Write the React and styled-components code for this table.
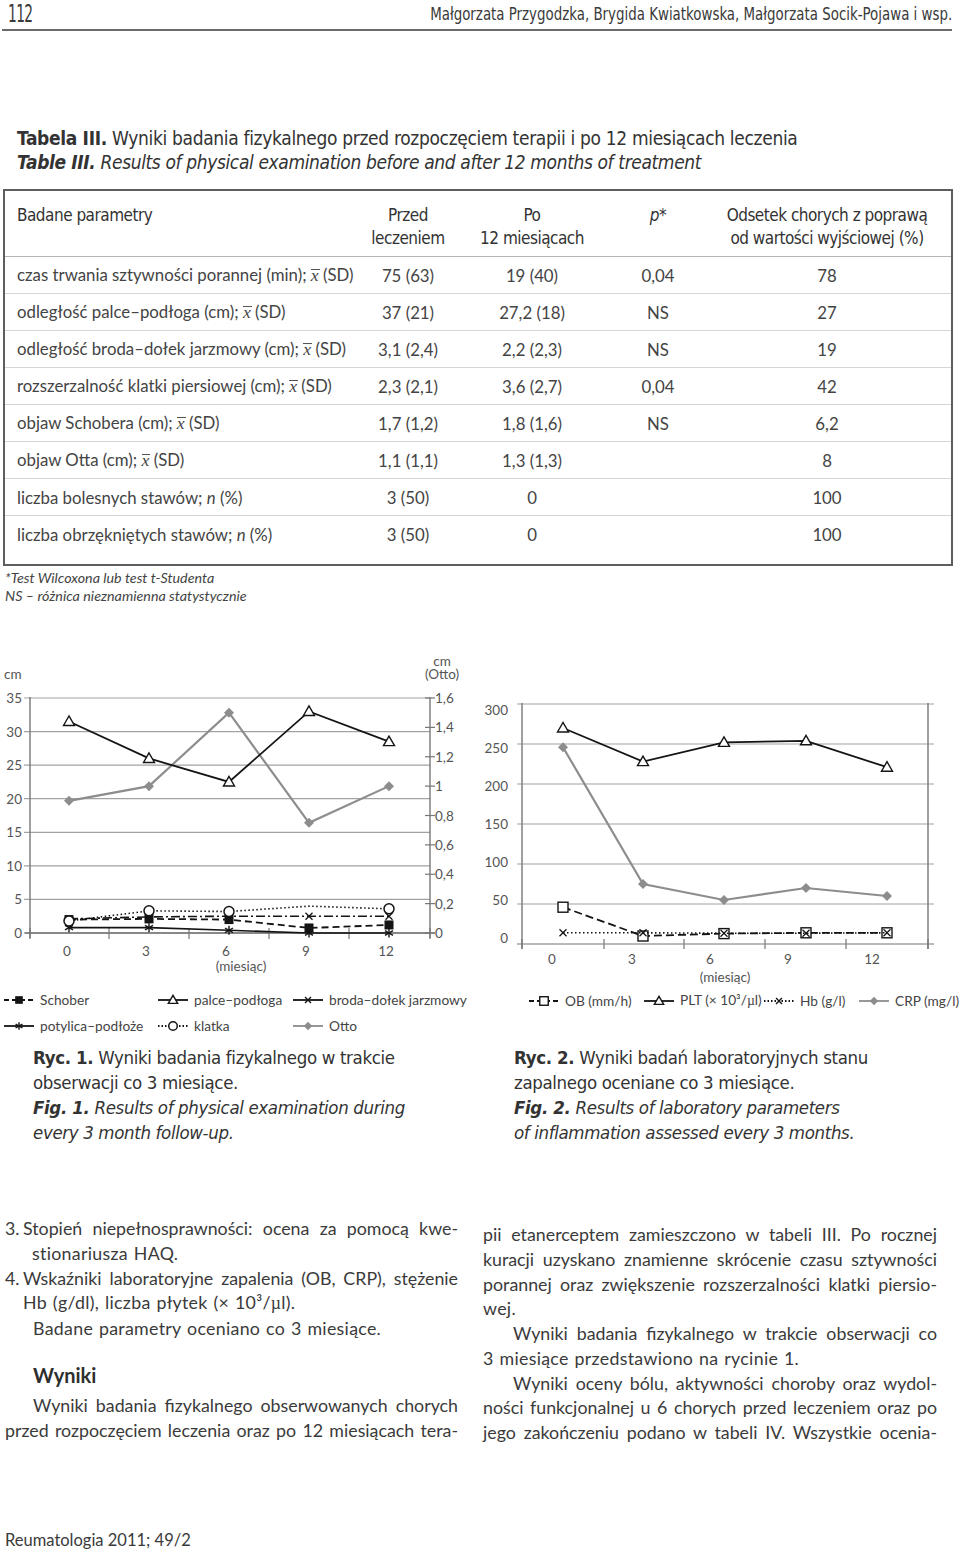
import React from 'react'
import styled, { createGlobalStyle } from 'styled-components'

const narrow = `"Liberation Sans Narrow", "DejaVu Sans Condensed", "Roboto Condensed", Roboto, sans-serif`

const GlobalStyle = createGlobalStyle`
  body {
    margin: 0;
    background: #fff;
    color: #3a3a3a;
    font-family: Lato, "Open Sans", sans-serif;
  }
`

export default function App() {
  return (
    <Page>
      <GlobalStyle />
      <Running>
        <PageNo>112</PageNo>
        <Authors>Małgorzata Przygodzka, Brygida Kwiatkowska, Małgorzata Socik-Pojawa i wsp.</Authors>
      </Running>

      <TableTitle>
        <div>
          <b>Tabela III.</b> Wyniki badania fizykalnego przed rozpoczęciem terapii i po 12 miesiącach leczenia
        </div>
        <em>
          <b>Table III.</b> Results of physical examination before and after 12 months of treatment
        </em>
      </TableTitle>

      <ResultsTable />

      <Notes>
        <div>*Test Wilcoxona lub test t-Studenta</div>
        <div>NS – różnica nieznamienna statystycznie</div>
      </Notes>

      <Figures>
        <Figure>
          <PhysicalChart />
          <Legend $cols="154px 135px auto" $pad={3}>
            {legend1.map(l => (
              <LegendItem key={l.id}>
                <LegendMark dash={l.dash} marker={l.marker} color={l.color} />
                {l.id}
              </LegendItem>
            ))}
          </Legend>
        </Figure>
        <Figure>
          <LabChart />
          <Legend $cols="115px 120px 95px auto" $pad={48}>
            {legend2.map(l => (
              <LegendItem key={l.id}>
                <LegendMark dash={l.dash} marker={l.marker} color={l.color} />
                {l.id === 'PLT' ? (
                  <span>
                    PLT (× 10³/<Mu>µ</Mu>l)
                  </span>
                ) : (
                  l.id
                )}
              </LegendItem>
            ))}
          </Legend>
        </Figure>
      </Figures>

      <Captions>
        <FigCaption $pad={33}>
          <b>Ryc. 1.</b> Wyniki badania fizykalnego w trakcie
          <br />
          obserwacji co 3 miesiące.
          <br />
          <em>
            <b>Fig. 1.</b> Results of physical examination during
            <br />
            every 3 month follow-up.
          </em>
        </FigCaption>
        <FigCaption $pad={34}>
          <b>Ryc. 2.</b> Wyniki badań laboratoryjnych stanu
          <br />
          zapalnego oceniane co 3 miesiące.
          <br />
          <em>
            <b>Fig. 2.</b> Results of laboratory parameters
            <br />
            of inflammation assessed every 3 months.
          </em>
        </FigCaption>
      </Captions>

      <Columns>
        <Col>
          <Line>
            <Num>3.</Num>Stopień niepełnosprawności: ocena za pomocą kwe-
          </Line>
          <Line $indent={27} $last>stionariusza HAQ.</Line>
          <Line>
            <Num>4.</Num>Wskaźniki laboratoryjne zapalenia (OB, CRP), stężenie
          </Line>
          <Line $indent={18} $last>
            Hb (g/dl), liczba płytek (× 10³/<Mu>µ</Mu>l).
          </Line>
          <Line $indent={28} $last>Badane parametry oceniano co 3 miesiące.</Line>
          <Heading>Wyniki</Heading>
          <Line $indent={28}>Wyniki badania fizykalnego obserwowanych chorych</Line>
          <Line>przed rozpoczęciem leczenia oraz po 12 miesiącach tera-</Line>
        </Col>
        <Col $offset={6}>
          <Line>pii etanerceptem zamieszczono w tabeli III. Po rocznej</Line>
          <Line>kuracji uzyskano znamienne skrócenie czasu sztywności</Line>
          <Line>porannej oraz zwiększenie rozszerzalności klatki piersio-</Line>
          <Line $last>wej.</Line>
          <Line $indent={30}>Wyniki badania fizykalnego w trakcie obserwacji co</Line>
          <Line $last>3 miesiące przedstawiono na rycinie 1.</Line>
          <Line $indent={30}>Wyniki oceny bólu, aktywności choroby oraz wydol-</Line>
          <Line>ności funkcjonalnej u 6 chorych przed leczeniem oraz po</Line>
          <Line>jego zakończeniu podano w tabeli IV. Wszystkie ocenia-</Line>
        </Col>
      </Columns>

      <Footer>Reumatologia 2011; 49/2</Footer>
    </Page>
  )
}

/* ---------- table ---------- */

const rows = [
  ['czas trwania sztywności porannej (min);', 'mean', '75 (63)', '19 (40)', '0,04', '78'],
  ['odległość palce–podłoga (cm);', 'mean', '37 (21)', '27,2 (18)', 'NS', '27'],
  ['odległość broda–dołek jarzmowy (cm);', 'mean', '3,1 (2,4)', '2,2 (2,3)', 'NS', '19'],
  ['rozszerzalność klatki piersiowej (cm);', 'mean', '2,3 (2,1)', '3,6 (2,7)', '0,04', '42'],
  ['objaw Schobera (cm);', 'mean', '1,7 (1,2)', '1,8 (1,6)', 'NS', '6,2'],
  ['objaw Otta (cm);', 'mean', '1,1 (1,1)', '1,3 (1,3)', '', '8'],
  ['liczba bolesnych stawów;', 'n', '3 (50)', '0', '', '100'],
  ['liczba obrzękniętych stawów;', 'n', '3 (50)', '0', '', '100'],
]

const ResultsTable = () => (
  <TableBox>
    <HeadRow>
      <HeadCell $left>Badane parametry</HeadCell>
      <HeadCell>
        Przed
        <br />
        leczeniem
      </HeadCell>
      <HeadCell>
        Po
        <br />
        12 miesiącach
      </HeadCell>
      <HeadCell>
        <i>p</i>*
      </HeadCell>
      <HeadCell>
        Odsetek chorych z poprawą
        <br />
        od wartości wyjściowej (%)
      </HeadCell>
    </HeadRow>
    {rows.map(([label, stat, before, after, p, pct], i) => (
      <Row key={label} $last={i === rows.length - 1}>
        <Cell $left>
          {label}{' '}
          {stat === 'mean' ? (
            <>
              <XBar>x</XBar> (SD)
            </>
          ) : (
            <>
              <i>n</i> (%)
            </>
          )}
        </Cell>
        <Cell>{before}</Cell>
        <Cell>{after}</Cell>
        <Cell>{p}</Cell>
        <Cell>{pct}</Cell>
      </Row>
    ))}
  </TableBox>
)

/* ---------- charts ---------- */

const Marker = ({ type, x, y, s = 1 }) => {
  const k = '#141414'
  switch (type) {
    case 'triangle':
      return (
        <polygon
          points={`${x},${y - 5.5 * s} ${x - 5.5 * s},${y + 4 * s} ${x + 5.5 * s},${y + 4 * s}`}
          fill="#fff"
          stroke={k}
          strokeWidth={1.4}
        />
      )
    case 'diamond':
      return (
        <polygon
          points={`${x},${y - 5 * s} ${x + 5 * s},${y} ${x},${y + 5 * s} ${x - 5 * s},${y}`}
          fill="#8d8d8d"
        />
      )
    case 'squareFilled':
      return <rect x={x - 4.5 * s} y={y - 4.5 * s} width={9 * s} height={9 * s} fill={k} />
    case 'square':
      return (
        <rect
          x={x - 5 * s}
          y={y - 5 * s}
          width={10 * s}
          height={10 * s}
          fill="#fff"
          stroke={k}
          strokeWidth={1.4}
        />
      )
    case 'circle':
      return <circle cx={x} cy={y} r={5 * s} fill="#fff" stroke={k} strokeWidth={1.5} />
    case 'cross':
      return (
        <g stroke={k} strokeWidth={1.3}>
          <line x1={x - 3.5 * s} y1={y - 3.5 * s} x2={x + 3.5 * s} y2={y + 3.5 * s} />
          <line x1={x - 3.5 * s} y1={y + 3.5 * s} x2={x + 3.5 * s} y2={y - 3.5 * s} />
        </g>
      )
    case 'asterisk':
      return (
        <g stroke={k} strokeWidth={1.4}>
          <line x1={x} y1={y - 4.5 * s} x2={x} y2={y + 4.5 * s} />
          <line x1={x - 4 * s} y1={y - 2.3 * s} x2={x + 4 * s} y2={y + 2.3 * s} />
          <line x1={x - 4 * s} y1={y + 2.3 * s} x2={x + 4 * s} y2={y - 2.3 * s} />
        </g>
      )
    default:
      return null
  }
}

const Series = ({ xs, data }) => {
  const { ys, color, width, dash, marker, skip = [] } = data
  return (
    <g>
      <polyline
        points={xs.map((x, i) => `${x},${ys[i]}`).join(' ')}
        fill="none"
        stroke={color}
        strokeWidth={width}
        strokeDasharray={dash}
      />
      {xs.map((x, i) => (skip.includes(i) ? null : <Marker key={i} type={marker} x={x} y={ys[i]} />))}
    </g>
  )
}

const grid = '#a2a2a2'
const axis = '#777'
const black = '#141414'
const gray = '#8d8d8d'

const xs1 = [69, 149, 229, 309, 389]
const yL = v => 935 - (v * 235) / 35
const yR = v => 935 - (v * 235) / 1.6

const series1 = [
  { id: 'otto', color: gray, width: 2.2, marker: 'diamond', ys: [0.9, 1.0, 1.5, 0.75, 1.0].map(yR) },
  { id: 'palce', color: black, width: 1.8, marker: 'triangle', ys: [31.5, 26, 22.5, 33, 28.5].map(yL) },
  { id: 'potylica', color: black, width: 1.6, marker: 'asterisk', ys: [0.8, 0.8, 0.4, 0, 0].map(yL) },
  { id: 'schober', color: black, width: 1.8, dash: '7 4', marker: 'squareFilled', ys: [2.0, 2.1, 2.0, 0.75, 1.2].map(yL) },
  { id: 'broda', color: black, width: 1.6, dash: '9 3 2 3', marker: 'cross', ys: [2.1, 2.4, 2.5, 2.5, 2.5].map(yL) },
  { id: 'klatka', color: black, width: 1.6, dash: '1.5 2.5', marker: 'circle', ys: [1.8, 3.3, 3.2, 4.0, 3.6].map(yL), skip: [3] },
]

const PhysicalChart = () => (
  <ChartSvg width="480" height="336" viewBox="0 650 480 336">
    <g fontSize="13.5" fill="#555">
      <text x="4" y="681">cm</text>
      <text x="442" y="668" textAnchor="middle">cm</text>
      <text x="442" y="681" textAnchor="middle">(Otto)</text>
    </g>
    {[35, 30, 25, 20, 15, 10, 5, 0].map(v => (
      <g key={v}>
        <line x1="24" x2="430" y1={yL(v)} y2={yL(v)} stroke={v === 0 ? axis : grid} strokeWidth="1.2" />
        <text x="22" y={yL(v) + 5} textAnchor="end" fontSize="13.5" fill="#555">
          {v}
        </text>
      </g>
    ))}
    {[1.6, 1.4, 1.2, 1, 0.8, 0.6, 0.4, 0.2, 0].map(v => (
      <g key={v}>
        <line x1="425" x2="435" y1={yR(v)} y2={yR(v)} stroke={axis} strokeWidth="1.2" />
        <text x="435" y={yR(v) + 5} fontSize="13.5" fill="#555">
          {String(v).replace('.', ',')}
        </text>
      </g>
    ))}
    <line x1="30" x2="30" y1="699" y2="940" stroke={axis} strokeWidth="1.4" />
    <line x1="430" x2="430" y1="699" y2="940" stroke={axis} strokeWidth="1.4" />
    <line x1="25" x2="435" y1="935" y2="935" stroke={axis} strokeWidth="1.4" />
    {[30, 109, 189, 269, 349, 430].map(x => (
      <line key={x} x1={x} x2={x} y1="930" y2="941" stroke={axis} strokeWidth="1.2" />
    ))}
    {series1.map(s => (
      <Series key={s.id} xs={xs1} data={s} />
    ))}
    <g fontSize="13.5" fill="#555" textAnchor="middle">
      {['0', '3', '6', '9', '12'].map((t, i) => (
        <text key={t} x={[67, 146, 226, 306, 386][i]} y="958">
          {t}
        </text>
      ))}
      <text x="241" y="973">(miesiąc)</text>
    </g>
  </ChartSvg>
)

const xs2 = [563, 643, 724, 806, 887]
const y2 = v => 946 - v * 0.8

const series2 = [
  { id: 'crp', color: gray, width: 2.2, marker: 'diamond', ys: [246, 75, 55, 70, 60].map(y2) },
  { id: 'plt', color: black, width: 1.8, marker: 'triangle', ys: [270, 228, 252, 254, 221].map(y2) },
  { id: 'ob', color: black, width: 1.8, dash: '8 4', marker: 'square', ys: [46, 10, 13, 14, 14].map(y2) },
  { id: 'hb', color: black, width: 1.6, dash: '1.5 2.5', marker: 'cross', ys: [14, 14, 13.5, 13.5, 14].map(y2) },
]

const LabChart = () => (
  <ChartSvg width="480" height="336" viewBox="480 650 480 336">
    {[300, 250, 200, 150, 100, 50, 0].map(v => (
      <g key={v}>
        <line x1="517" x2="934" y1={y2(v)} y2={y2(v)} stroke={v === 0 ? axis : grid} strokeWidth="1.2" />
        <text x="508" y={940 - (v / 50) * 38 + 5} textAnchor="end" fontSize="13.5" fill="#555">
          {v}
        </text>
      </g>
    ))}
    <line x1="522" x2="522" y1="705" y2="951" stroke={axis} strokeWidth="1.4" />
    <line x1="928" x2="928" y1="705" y2="951" stroke={axis} strokeWidth="1.4" />
    {[522, 604, 684, 765, 846, 928].map(x => (
      <line key={x} x1={x} x2={x} y1="941" y2="951" stroke={axis} strokeWidth="1.2" />
    ))}
    {series2.map(s => (
      <Series key={s.id} xs={xs2} data={s} />
    ))}
    <g fontSize="13.5" fill="#555" textAnchor="middle">
      {['0', '3', '6', '9', '12'].map((t, i) => (
        <text key={t} x={[552, 632, 710, 788, 872][i]} y="966">
          {t}
        </text>
      ))}
      <text x="725" y="984">(miesiąc)</text>
    </g>
  </ChartSvg>
)

const legend1 = [
  { id: 'Schober', dash: '5 3', marker: 'squareFilled', color: black },
  { id: 'palce–podłoga', marker: 'triangle', color: black },
  { id: 'broda–dołek jarzmowy', marker: 'cross', color: black },
  { id: 'potylica–podłoże', marker: 'asterisk', color: black },
  { id: 'klatka', dash: '1.5 2', marker: 'circle', color: black },
  { id: 'Otto', marker: 'diamond', color: gray },
]

const legend2 = [
  { id: 'OB (mm/h)', dash: '5 3', marker: 'square', color: black },
  { id: 'PLT', marker: 'triangle', color: black },
  { id: 'Hb (g/l)', dash: '1.5 2', marker: 'cross', color: black },
  { id: 'CRP (mg/l)', marker: 'diamond', color: gray },
]

const LegendMark = ({ dash, marker, color }) => (
  <svg width="32" height="12" viewBox="0 0 32 12">
    <line x1="1" x2="31" y1="6" y2="6" stroke={color} strokeWidth="1.8" strokeDasharray={dash} />
    <Marker type={marker} x={16} y={6} s={0.85} />
  </svg>
)

/* ---------- styles ---------- */

const Page = styled.div`
  width: 960px;
  height: 1557px;
  overflow: hidden;
`

const Running = styled.header`
  display: flex;
  justify-content: space-between;
  align-items: center;
  width: 950px;
  height: 31px;
  margin-left: 2px;
  padding: 2px 0 3px 6px;
  box-sizing: border-box;
  border-bottom: 2px solid #6b6b6b;
  font-family: ${narrow};
  line-height: 24px;
  color: #3a3a3a;
`

/* the scan uses a condensed face; squeeze the fallback horizontally */
const PageNo = styled.span`
  display: inline-block;
  font-size: 24px;
  letter-spacing: -1px;
  transform: scaleX(0.64);
  transform-origin: left center;
`

const Authors = styled.span`
  display: inline-block;
  font-size: 17.5px;
  transform: scaleX(0.85);
  transform-origin: right center;
  white-space: nowrap;
`

const TableTitle = styled.div`
  margin: 95px 0 0 17px;
  font-family: ${narrow};
  font-size: 19px;
  line-height: 24px;
  letter-spacing: -0.33px;
  color: #333;

  em {
    letter-spacing: -0.37px;
  }

  em b {
    font-style: italic;
  }
`

const cols = '355px 96px 152px 100px 238px'

const TableBox = styled.div`
  width: 950px;
  margin: 15px 0 0 3px;
  padding-bottom: 11px;
  box-sizing: border-box;
  border: 2px solid #5e5e5e;
`

const HeadRow = styled.div`
  display: grid;
  grid-template-columns: ${cols};
  padding: 13px 0 6px;
  border-bottom: 1px solid #b5b5b5;
  font-family: ${narrow};
  font-size: 17px;
  letter-spacing: -0.5px;
  line-height: 23px;
  color: #333;
`

const HeadCell = styled.div`
  text-align: ${p => (p.$left ? 'left' : 'center')};
  padding-left: ${p => (p.$left ? '12px' : '0')};
  white-space: nowrap;
`

const Row = styled.div`
  display: grid;
  grid-template-columns: ${cols};
  align-items: center;
  height: 37px;
  box-sizing: border-box;
  border-bottom: ${p => (p.$last ? 'none' : '1px solid #d6d6d6')};
  font-size: 16.8px;
  color: #444;
`

const Cell = styled.div`
  text-align: ${p => (p.$left ? 'left' : 'center')};
  padding-left: ${p => (p.$left ? '12px' : '0')};
  white-space: nowrap;
`

const XBar = styled.i`
  position: relative;
  font-family: 'Liberation Serif', serif;
  font-size: 1.05em;

  &::before {
    content: '';
    position: absolute;
    left: 0;
    right: -1px;
    top: 0.22em;
    border-top: 1px solid #555;
  }
`

const Notes = styled.div`
  margin: 3px 0 0 5px;
  font-style: italic;
  font-size: 14.3px;
  line-height: 18px;
  color: #444;
`

const Figures = styled.div`
  display: grid;
  grid-template-columns: 480px 480px;
  margin-top: 43px;
`

const Figure = styled.div`
  display: flex;
  flex-direction: column;
`

const ChartSvg = styled.svg`
  display: block;
  font-family: Lato, 'Open Sans', sans-serif;
`

const Legend = styled.div`
  display: grid;
  grid-template-columns: ${p => p.$cols};
  margin-top: 3px;
  padding-left: ${p => p.$pad}px;
  font-size: 13.7px;
  line-height: 26px;
  color: #444;
`

const LegendItem = styled.div`
  display: flex;
  align-items: center;
  gap: 5px;
  white-space: nowrap;
`

const Mu = styled.span`
  font-family: 'Liberation Serif', serif;
`

const Captions = styled.div`
  display: grid;
  grid-template-columns: 480px 480px;
  margin-top: 6px;
`

const FigCaption = styled.div`
  padding-left: ${p => p.$pad}px;
  font-family: ${narrow};
  font-size: 18.5px;
  letter-spacing: -0.35px;
  line-height: 25px;
  color: #333;

  em b {
    font-style: italic;
  }
`

const Columns = styled.div`
  display: grid;
  grid-template-columns: 453px 454px;
  column-gap: 25px;
  margin: 71px 0 0 5px;
  font-size: 17.8px;
  line-height: 24.75px;
  color: #3a3a3a;
`

const Col = styled.div`
  padding-top: ${p => p.$offset || 0}px;
`

const Line = styled.div`
  padding-left: ${p => p.$indent || 0}px;
  text-align: justify;
  text-align-last: ${p => (p.$last ? 'left' : 'justify')};
  word-spacing: ${p => (p.$last ? '1px' : '-1px')};
  letter-spacing: ${p => (p.$last ? '0.3px' : '0')};
`

const Num = styled.span`
  display: inline-block;
  width: 18px;
`

const Heading = styled.div`
  margin: 21px 0 5px 28px;
  font-size: 20px;
  font-weight: 700;
  line-height: 26px;
  color: #2e2e2e;
`

const Footer = styled.div`
  margin: 84px 0 0 5px;
  font-size: 16.5px;
  line-height: 22px;
  color: #3a3a3a;
`
